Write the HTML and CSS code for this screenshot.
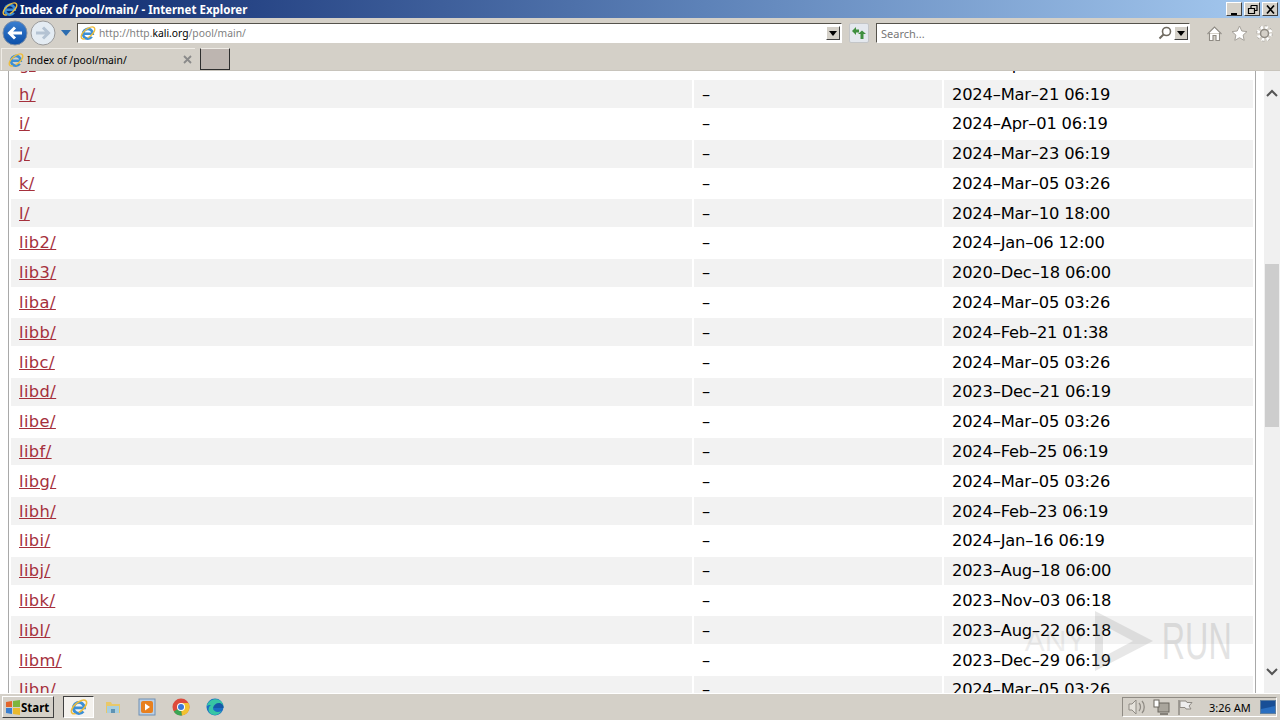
FILE: index.html
```html
<!DOCTYPE html>
<html lang="en">
<head>
    <meta charset="UTF-8">
    <title>Index of /pool/main/ - Internet Explorer</title>
    <link rel="stylesheet" href="styles.css">
</head>
<body>
    <svg class="defs" width="0" height="0">
        <symbol id="ie" viewBox="0 0 16 16">
            <path d="M3.2 8.800h9.600A4.900 4.900 0 1 0 11.800 11.800" fill="none" stroke="#3b8fd6" stroke-width="2.600"/>
            <ellipse cx="8" cy="8" rx="8.200" ry="3.900" transform="rotate(-40 8 8)" fill="none" stroke="#eebd3c" stroke-width="1.400" stroke-dasharray="13 3 16 0"/>
        </symbol>
    </svg>

    <div class="titlebar">
        <svg class="title-icon"><use href="#ie"/></svg>
        <span class="title-text">Index of /pool/main/ - Internet Explorer</span>
        <div class="win-buttons">
            <div class="win-btn"><svg width="13" height="11"><path d="M3 9h6v2H3z" fill="#000"/></svg></div>
            <div class="win-btn"><svg width="13" height="11"><path d="M5 1.500h6v5H9M5 1.500V4M2.500 4.500h6v5h-6z" fill="none" stroke="#000" stroke-width="1.200"/></svg></div>
            <div class="win-btn"><svg width="13" height="11"><path d="M3 1.500l7 8M10 1.500l-7 8" stroke="#000" stroke-width="1.700"/></svg></div>
        </div>
    </div>

    <div class="navbar">
        <svg class="nav-btn" width="26" height="26" viewBox="0 0 26 26">
            <defs>
                <linearGradient id="backFill" x1="0" y1="0" x2="0" y2="1"><stop offset="0" stop-color="#3c7fd0"/><stop offset="1" stop-color="#0b4fa8"/></linearGradient>
            </defs>
            <circle cx="13" cy="13" r="12" fill="url(#backFill)" stroke="#7d8ea6"/>
            <path d="M20 13H8M13 7.500L7.500 13l5.500 5.500" fill="none" stroke="#fff" stroke-width="3"/>
        </svg>
        <svg class="nav-btn" width="26" height="26" viewBox="0 0 26 26">
            <circle cx="13" cy="13" r="12" fill="#e4ecf3" stroke="#9a9a9a"/>
            <path d="M6 13h12M13 7.500l5.500 5.500-5.500 5.500" fill="none" stroke="#b4c3d3" stroke-width="3"/>
        </svg>
        <svg class="nav-drop" width="10" height="6"><path d="M0 0h10L5 6z" fill="#2b6cb0"/></svg>

        <div class="address">
            <svg class="addr-icon"><use href="#ie"/></svg>
            <span class="addr-text">http://http.<b>kali.org</b>/pool/main/</span>
            <div class="combo-btn"><svg width="8" height="5"><path d="M0 0h8L4 5z" fill="#000"/></svg></div>
        </div>
        <div class="go-btn">
            <svg width="16" height="14" viewBox="0 0 16 14"><path d="M1 5l4-4v2.500h3v3H5V9zM15 8l-4-3.500L7 8h2.500v5h3V8z" fill="#3f8f3f"/></svg>
        </div>
        <div class="search">
            <span class="search-text">Search...</span>
            <svg class="search-glass" width="14" height="14" viewBox="0 0 14 14"><circle cx="8.500" cy="5.500" r="4" fill="none" stroke="#6f6a60" stroke-width="1.600"/><path d="M5.500 8.500L1.500 12.500" stroke="#6f6a60" stroke-width="2"/></svg>
            <div class="combo-btn"><svg width="8" height="5"><path d="M0 0h8L4 5z" fill="#000"/></svg></div>
        </div>
        <div class="tools">
            <svg width="17" height="17" viewBox="0 0 17 17"><path d="M1.500 9L8.500 2l7 7M3.500 8v7.500h3.500v-5h3v5h3.500V8" fill="#fff" stroke="#8f8b84" stroke-width="1.100"/></svg>
            <svg width="17" height="17" viewBox="0 0 17 17"><path d="M8.500 1l2.300 5 5.200.6-3.900 3.500 1.100 5.300-4.700-2.700-4.700 2.700 1.100-5.300L1 6.600 6.200 6z" fill="#fff" stroke="#a5a19a"/></svg>
            <svg width="17" height="17" viewBox="0 0 17 17"><circle cx="8.500" cy="8.500" r="6.300" fill="none" stroke="#fff" stroke-width="3.200" stroke-dasharray="2.500 2.450"/><circle cx="8.500" cy="8.500" r="7.800" fill="none" stroke="#a5a19a" stroke-width=".8" stroke-dasharray="2.500 3.600"/><circle cx="8.500" cy="8.500" r="4" fill="none" stroke="#8f8b84" stroke-width="1.500"/></svg>
        </div>
    </div>

    <div class="tabbar">
        <div class="tab">
            <svg class="tab-icon"><use href="#ie"/></svg>
            <span class="tab-title">Index of /pool/main/</span>
            <svg class="tab-close" width="9" height="9"><path d="M1 1l7 7M8 1L1 8" stroke="#8a8a8a" stroke-width="1.800"/></svg>
        </div>
        <div class="new-tab"></div>
    </div>

    <div class="viewport">
        <div class="page">
            <table class="listing">
                <tr><td><a href="#">g/</a></td><td>–</td><td>2024–Apr–02 06:19</td></tr>
                <tr><td><a href="#">h/</a></td><td>–</td><td>2024–Mar–21 06:19</td></tr>
                <tr><td><a href="#">i/</a></td><td>–</td><td>2024–Apr–01 06:19</td></tr>
                <tr><td><a href="#">j/</a></td><td>–</td><td>2024–Mar–23 06:19</td></tr>
                <tr><td><a href="#">k/</a></td><td>–</td><td>2024–Mar–05 03:26</td></tr>
                <tr><td><a href="#">l/</a></td><td>–</td><td>2024–Mar–10 18:00</td></tr>
                <tr><td><a href="#">lib2/</a></td><td>–</td><td>2024–Jan–06 12:00</td></tr>
                <tr><td><a href="#">lib3/</a></td><td>–</td><td>2020–Dec–18 06:00</td></tr>
                <tr><td><a href="#">liba/</a></td><td>–</td><td>2024–Mar–05 03:26</td></tr>
                <tr><td><a href="#">libb/</a></td><td>–</td><td>2024–Feb–21 01:38</td></tr>
                <tr><td><a href="#">libc/</a></td><td>–</td><td>2024–Mar–05 03:26</td></tr>
                <tr><td><a href="#">libd/</a></td><td>–</td><td>2023–Dec–21 06:19</td></tr>
                <tr><td><a href="#">libe/</a></td><td>–</td><td>2024–Mar–05 03:26</td></tr>
                <tr><td><a href="#">libf/</a></td><td>–</td><td>2024–Feb–25 06:19</td></tr>
                <tr><td><a href="#">libg/</a></td><td>–</td><td>2024–Mar–05 03:26</td></tr>
                <tr><td><a href="#">libh/</a></td><td>–</td><td>2024–Feb–23 06:19</td></tr>
                <tr><td><a href="#">libi/</a></td><td>–</td><td>2024–Jan–16 06:19</td></tr>
                <tr><td><a href="#">libj/</a></td><td>–</td><td>2023–Aug–18 06:00</td></tr>
                <tr><td><a href="#">libk/</a></td><td>–</td><td>2023–Nov–03 06:18</td></tr>
                <tr><td><a href="#">libl/</a></td><td>–</td><td>2023–Aug–22 06:18</td></tr>
                <tr><td><a href="#">libm/</a></td><td>–</td><td>2023–Dec–29 06:19</td></tr>
                <tr><td><a href="#">libn/</a></td><td>–</td><td>2024–Mar–05 03:26</td></tr>
            </table>
        </div>
        <div class="scrollbar">
            <svg width="12" height="8"><path d="M1 7l5-5 5 5" fill="none" stroke="#555" stroke-width="2"/></svg>
            <div class="track"><div class="thumb"></div></div>
            <svg width="12" height="8"><path d="M1 1l5 5 5-5" fill="none" stroke="#555" stroke-width="2"/></svg>
        </div>
        <div class="watermark">
            <span class="wm-any">ANY</span>
            <svg width="66" height="64" viewBox="0 0 66 64"><path d="M6 2l58 30L6 62zM14 16v32l30-16z" fill="#8a8a8a" fill-rule="evenodd"/></svg>
            <span class="wm-run">RUN</span>
        </div>
    </div>

    <div class="taskbar">
        <div class="start">
            <svg width="16" height="15" viewBox="0 0 16 15">
                <path d="M1 2l6-1v6H1z" fill="#e2662c"/><path d="M8 1l7-1v7H8z" fill="#7cb53c"/>
                <path d="M1 8h6v6l-6-1z" fill="#3a7fd0"/><path d="M8 8h7v7l-7-1z" fill="#e9b92f"/>
            </svg>
            <span>Start</span>
        </div>
        <div class="task-apps">
            <div class="task-app active"><svg width="18" height="18"><use href="#ie"/></svg></div>
            <div class="task-app">
                <svg width="18" height="18" viewBox="0 0 18 18"><path d="M2 4h5l1 2h8v9H2z" fill="#e9c86a"/><path d="M3 8h12v7H3z" fill="#a9cfe0"/><path d="M7 15v-4h4v4" fill="#5f93b3"/></svg>
            </div>
            <div class="task-app">
                <svg width="18" height="18" viewBox="0 0 18 18"><rect x="1" y="1" width="16" height="16" fill="#bcd0e6" stroke="#6f8fb3"/><rect x="3" y="3" width="12" height="12" rx="2" fill="#e8801f"/><path d="M7 5.500l5 3.500-5 3.500z" fill="#fff"/></svg>
            </div>
            <div class="task-app">
                <svg width="18" height="18" viewBox="0 0 18 18"><circle cx="9" cy="9" r="8.500" fill="#dd4b3c"/><path d="M9 9L1.800 13.500A8.500 8.500 0 0 0 10 17.500z" fill="#3aa655"/><path d="M9 5h7.500A8.500 8.500 0 0 1 10 17.500L9 9z" fill="#f2c230"/><circle cx="9" cy="9" r="4" fill="#fff"/><circle cx="9" cy="9" r="3" fill="#3b78d8"/></svg>
            </div>
            <div class="task-app">
                <svg width="18" height="18" viewBox="0 0 18 18"><circle cx="9" cy="9" r="8.500" fill="#1a6fc4"/><path d="M.8 8C2 2.500 9-.5 14 2.500c3 2 3.800 5.500 3 7.500H7c0 3.500 4.500 5 8.500 3C13 17 7.500 18.500 4 15 1.800 12.800 2 9 5 7 2.800 7 1.500 7.500.8 8z" fill="#37c6a4"/><path d="M7 10h10.500c.2-2.500-1.500-5-4.500-5-3 0-5.500 2-6 5z" fill="#1559a8"/></svg>
            </div>
        </div>
        <div class="tray">
            <svg width="18" height="16" viewBox="0 0 18 16"><path d="M1 5h3l4-4v14l-4-4H1z" fill="#e6e3dc" stroke="#8f8b84"/><path d="M11 4c2 2 2 6 0 8M14 2c3 3 3 9 0 12" fill="none" stroke="#8f8b84" stroke-width="1.300"/></svg>
            <svg width="17" height="16" viewBox="0 0 17 16"><rect x="5" y="4" width="11" height="9" fill="#a9a59c" stroke="#6b675f"/><rect x="1" y="1" width="5" height="7" fill="#fff" stroke="#6b675f"/><path d="M7 15h8" stroke="#6b675f" stroke-width="1.500"/></svg>
            <svg width="16" height="16" viewBox="0 0 16 16"><path d="M2 1v15" stroke="#8f8b84" stroke-width="1.500"/><path d="M3 2h6l1 1.500h5L12 7l2 3H9L8 8.500H3z" fill="#eee" stroke="#8f8b84"/></svg>
            <span class="clock">3:26 AM</span>
            <svg class="show-desktop" width="16" height="14" viewBox="0 0 16 14"><rect x=".5" y=".5" width="15" height="13" fill="#2a6fc0" stroke="#5f7f9f"/><path d="M1 1h14v5L1 9z" fill="#184f96"/></svg>
        </div>
    </div>
</body>
</html>
```

FILE: styles.css
```css
:root {
    --chrome: #d4d0c8;
    --chrome-dark: #404040;
    --stripe: #f2f2f2;
    --link: #a5303c;
}

html, body {
    margin: 0;
    padding: 0;
    height: 100%;
    overflow: hidden;
}

body {
    display: flex;
    flex-direction: column;
    height: 720px;
    background-color: var(--chrome);
    font-family: "Noto Sans", sans-serif;
}

.defs {
    position: absolute;
}

/* title bar */
.titlebar {
    display: flex;
    align-items: center;
    flex: 0 0 18px;
    padding: 0 2px;
    background: linear-gradient(to right, #0a246a 0%, #5d82b8 55%, #a6caf0 100%);
    box-sizing: border-box;
}

.title-icon {
    width: 16px;
    height: 16px;
    margin-right: 2px;
}

.title-text {
    color: #fff;
    font-size: 11.5px;
    font-weight: bold;
    white-space: nowrap;
}

.win-buttons {
    display: flex;
    gap: 2px;
    margin-left: auto;
}

.win-btn {
    display: flex;
    align-items: center;
    justify-content: center;
    width: 14px;
    height: 12px;
    background-color: var(--chrome);
    border: 1px solid;
    border-color: #fff var(--chrome-dark) var(--chrome-dark) #fff;
}

/* address row */
.navbar {
    display: flex;
    align-items: center;
    flex: 0 0 30px;
    padding: 0 0 0 2px;
    box-sizing: border-box;
}

.nav-btn {
    flex: none;
    margin-right: 2px;
}

.nav-drop {
    flex: none;
    margin: 0 6px 0 3px;
}

.address, .search {
    display: flex;
    align-items: center;
    height: 20px;
    background-color: #fff;
    border: 1px solid;
    border-color: #55524b #fff #fff #55524b;
    box-sizing: border-box;
    font-size: 11px;
}

.address {
    flex: 0 0 765px;
}

.addr-icon {
    width: 16px;
    height: 16px;
    margin: 0 3px 0 2px;
}

.addr-text {
    color: #7f7f7f;
    font-size: 10.3px;
    white-space: nowrap;
}

.addr-text b {
    color: #000;
    font-weight: normal;
}

.combo-btn {
    display: flex;
    align-items: center;
    justify-content: center;
    width: 14px;
    height: 14px;
    margin-left: auto;
    margin-right: 1px;
    background-color: var(--chrome);
    border: 1px solid;
    border-color: #fff var(--chrome-dark) var(--chrome-dark) #fff;
    box-sizing: border-box;
}

.go-btn {
    display: flex;
    align-items: center;
    justify-content: center;
    flex: none;
    width: 20px;
    height: 20px;
    margin: 0 7px;
    background-color: #e4e8ee;
    border: 1px solid #c4c6c8;
    border-radius: 2px;
    box-sizing: border-box;
}

.search {
    flex: 0 0 314px;
    padding-left: 4px;
}

.search-text {
    color: #777;
}

.search-glass {
    margin-left: auto;
    margin-right: 2px;
}

.search .combo-btn {
    margin-left: 0;
}

.tools {
    display: flex;
    gap: 8px;
    margin-left: 16px;
}

/* tab row */
.tabbar {
    display: flex;
    flex: 0 0 22px;
    gap: 5px;
    padding-left: 1px;
    align-items: flex-start;
    box-sizing: border-box;
}

.tab {
    display: flex;
    align-items: center;
    width: 194px;
    height: 22px;
    padding: 0 3px 0 6px;
    border-top: 1px solid #efece6;
    border-left: 1px solid #efece6;
    box-sizing: border-box;
    font-size: 10.3px;
}

.tab-icon {
    width: 16px;
    height: 16px;
    margin-right: 3px;
}

.tab-title {
    white-space: nowrap;
}

.tab-close {
    margin-left: auto;
}

.new-tab {
    width: 30px;
    height: 22px;
    background-color: #bdb5b0;
    border: 1px solid;
    border-color: #efece6 #2e2e2e #2e2e2e #2e2e2e;
    box-sizing: border-box;
}

/* page area */
.viewport {
    display: flex;
    position: relative;
    flex: 1;
    min-height: 0;
    overflow: hidden;
    background-color: #fff;
    border-top: 1px solid #c8c4bc;
}

.page {
    flex: 1;
    min-width: 0;
    margin-left: 8px;
    margin-right: 8px;
    border-left: 1px solid #a9a9a9;
    border-right: 1px solid #a9a9a9;
    overflow: hidden;
}

.listing {
    width: 1246px;
    margin-top: -22.7px;
    border-spacing: 2px;
    table-layout: fixed;
    color: #000;
    font-family: "DejaVu Sans", sans-serif;
    font-size: 16.3px;
}

.listing td {
    height: 27.8px;
    padding: 0 8px;
    box-sizing: border-box;
    white-space: nowrap;
}

.listing td:first-child {
    width: 681px;
}

.listing td:nth-child(2) {
    width: 248px;
}

.listing td:last-child {
    letter-spacing: -0.18px;
}

.listing tr:nth-child(even) td {
    background-color: var(--stripe);
}

.listing a {
    color: var(--link);
    letter-spacing: 0.4px;
}

.scrollbar {
    display: flex;
    flex-direction: column;
    align-items: center;
    flex: 0 0 16px;
    background-color: #f0f0f0;
    padding: 18px 0 17px;
    box-sizing: border-box;
}

.track {
    flex: 1;
    width: 100%;
    padding-top: 167px;
    box-sizing: border-box;
}

.thumb {
    width: 14px;
    height: 163px;
    margin-left: 1px;
    background-color: #cdcdcd;
}

.watermark {
    display: flex;
    position: absolute;
    align-items: center;
    gap: 3px;
    right: 48px;
    bottom: 20px;
    color: #777;
    font-family: "Liberation Sans", sans-serif;
    opacity: 0.2;
    pointer-events: none;
}

.wm-any {
    font-size: 30px;
    opacity: 0.6;
}

/* tall narrow letters, the box keeps its full width so pull it back */
.wm-run {
    margin-left: -39px;
    font-size: 52px;
    transform: scaleX(0.62);
    transform-origin: right center;
}

/* taskbar */
.taskbar {
    display: flex;
    align-items: center;
    flex: 0 0 27px;
    padding: 0 3px 0 2px;
    border-top: 1px solid #fff;
    box-sizing: border-box;
}

.start {
    display: flex;
    align-items: center;
    width: 52px;
    height: 22px;
    padding-left: 2px;
    border: 1px solid;
    border-color: #fff #404040 #404040 #fff;
    box-sizing: border-box;
    font-size: 11.5px;
    font-weight: bold;
}

.task-apps {
    display: flex;
    gap: 3px;
    margin-left: 9px;
}

.task-app {
    display: flex;
    align-items: center;
    justify-content: center;
    width: 31px;
    height: 22px;
    box-sizing: border-box;
}

.task-app.active {
    background-color: #f4f2ee;
    border: 1px solid;
    border-color: #404040 #fff #fff #404040;
}

.tray {
    display: flex;
    align-items: center;
    gap: 7px;
    width: 155px;
    height: 20px;
    margin-left: auto;
    padding-left: 5px;
    border: 1px solid;
    border-color: #8f8b84 #fff #fff #8f8b84;
    box-sizing: border-box;
}

.clock {
    margin-left: 9px;
    font-size: 11px;
    white-space: nowrap;
}

.show-desktop {
    margin-left: auto;
}
```
